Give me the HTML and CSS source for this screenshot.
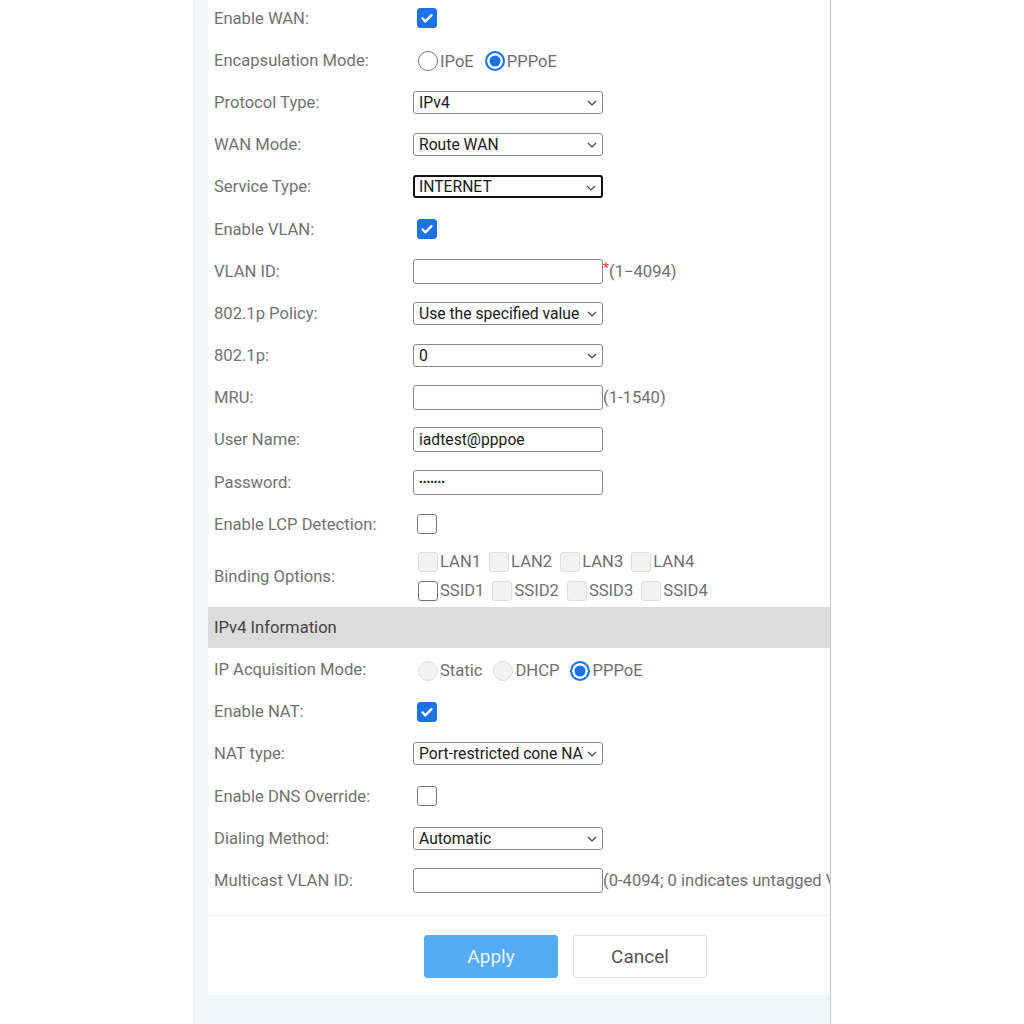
FILE: index.html
```html
<!DOCTYPE html>
<html>
<head>
<meta charset="utf-8">
<link rel="stylesheet" href="styles.css">
</head>
<body>
<div class="page">
  <div class="card">
    <div class="rows">
      <div class="row"><div class="lbl">Enable WAN:</div><div class="ctl"><span class="cb on"><svg viewBox="0 0 20 20"><path d="M5 10.5l3.2 3.2L15 6.8" fill="none" stroke="#fff" stroke-width="2.6" stroke-linecap="round" stroke-linejoin="round"/></svg></span></div></div>
      <div class="row"><div class="lbl">Encapsulation Mode:</div><div class="ctl opts"><span class="rd"></span><span class="opt-t">IPoE</span><span class="rd on"></span><span class="opt-t">PPPoE</span></div></div>
      <div class="row"><div class="lbl">Protocol Type:</div><div class="ctl"><div class="sel">IPv4<svg class="chev" viewBox="0 0 10 6"><path d="M1 1l4 4 4-4" fill="none" stroke="#444" stroke-width="1.2"/></svg></div></div></div>
      <div class="row"><div class="lbl">WAN Mode:</div><div class="ctl"><div class="sel">Route WAN<svg class="chev" viewBox="0 0 10 6"><path d="M1 1l4 4 4-4" fill="none" stroke="#444" stroke-width="1.2"/></svg></div></div></div>
      <div class="row"><div class="lbl">Service Type:</div><div class="ctl"><div class="sel focus">INTERNET<svg class="chev" viewBox="0 0 10 6"><path d="M1 1l4 4 4-4" fill="none" stroke="#444" stroke-width="1.2"/></svg></div></div></div>
      <div class="row"><div class="lbl">Enable VLAN:</div><div class="ctl"><span class="cb on"><svg viewBox="0 0 20 20"><path d="M5 10.5l3.2 3.2L15 6.8" fill="none" stroke="#fff" stroke-width="2.6" stroke-linecap="round" stroke-linejoin="round"/></svg></span></div></div>
      <div class="row"><div class="lbl">VLAN ID:</div><div class="ctl"><div class="inp"></div><span class="req">*</span><span class="hint">(1−4094)</span></div></div>
      <div class="row"><div class="lbl">802.1p Policy:</div><div class="ctl"><div class="sel"><span class="clip">Use the specified value</span><svg class="chev" viewBox="0 0 10 6"><path d="M1 1l4 4 4-4" fill="none" stroke="#444" stroke-width="1.2"/></svg></div></div></div>
      <div class="row"><div class="lbl">802.1p:</div><div class="ctl"><div class="sel">0<svg class="chev" viewBox="0 0 10 6"><path d="M1 1l4 4 4-4" fill="none" stroke="#444" stroke-width="1.2"/></svg></div></div></div>
      <div class="row"><div class="lbl">MRU:</div><div class="ctl"><div class="inp"></div><span class="hint">(1-1540)</span></div></div>
      <div class="row"><div class="lbl">User Name:</div><div class="ctl"><div class="inp">iadtest@pppoe</div></div></div>
      <div class="row"><div class="lbl">Password:</div><div class="ctl"><div class="inp pw">•••••••</div></div></div>
      <div class="row"><div class="lbl">Enable LCP Detection:</div><div class="ctl"><span class="cb"></span></div></div>
      <div class="row bind"><div class="lbl">Binding Options:</div>
        <div class="ctl binds">
          <div class="bline"><span class="cb dis"></span><span class="opt-t">LAN1</span><span class="cb dis"></span><span class="opt-t">LAN2</span><span class="cb dis"></span><span class="opt-t">LAN3</span><span class="cb dis"></span><span class="opt-t">LAN4</span></div>
          <div class="bline"><span class="cb"></span><span class="opt-t">SSID1</span><span class="cb dis"></span><span class="opt-t">SSID2</span><span class="cb dis"></span><span class="opt-t">SSID3</span><span class="cb dis"></span><span class="opt-t">SSID4</span></div>
        </div>
      </div>
      <div class="section">IPv4 Information</div>
      <div class="row"><div class="lbl">IP Acquisition Mode:</div><div class="ctl opts"><span class="rd dis"></span><span class="opt-t">Static</span><span class="rd dis"></span><span class="opt-t">DHCP</span><span class="rd on"></span><span class="opt-t">PPPoE</span></div></div>
      <div class="row"><div class="lbl">Enable NAT:</div><div class="ctl"><span class="cb on"><svg viewBox="0 0 20 20"><path d="M5 10.5l3.2 3.2L15 6.8" fill="none" stroke="#fff" stroke-width="2.6" stroke-linecap="round" stroke-linejoin="round"/></svg></span></div></div>
      <div class="row"><div class="lbl">NAT type:</div><div class="ctl"><div class="sel"><span class="clip">Port-restricted cone NAT</span><svg class="chev" viewBox="0 0 10 6"><path d="M1 1l4 4 4-4" fill="none" stroke="#444" stroke-width="1.2"/></svg></div></div></div>
      <div class="row"><div class="lbl">Enable DNS Override:</div><div class="ctl"><span class="cb"></span></div></div>
      <div class="row"><div class="lbl">Dialing Method:</div><div class="ctl"><div class="sel">Automatic<svg class="chev" viewBox="0 0 10 6"><path d="M1 1l4 4 4-4" fill="none" stroke="#444" stroke-width="1.2"/></svg></div></div></div>
      <div class="row"><div class="lbl">Multicast VLAN ID:</div><div class="ctl"><div class="inp"></div><span class="hint">(0-4094; 0 indicates untagged VLAN)</span></div></div>
    </div>
    <div class="actions">
      <button class="btn primary">Apply</button>
      <button class="btn">Cancel</button>
    </div>
  </div>
</div>
</body>
</html>
```

FILE: styles.css
```css
* { box-sizing: border-box; }
html, body { margin: 0; padding: 0; background: #fff; }
body { font-family: Roboto, "Liberation Sans", sans-serif; color: #707070; width: 1024px; height: 1024px; overflow: hidden; }

.page {
  margin-left: 193px;
  width: 638px;
  height: 1024px;
  background: #f3f6fb;
  border-right: 1px solid #c8c8c8;
  padding-left: 15px;
}
.card {
  background: #fff;
  overflow: hidden;
  height: 995px;
}
.rows { margin-top: -3px; padding-bottom: 13px; }
.row {
  display: flex;
  align-items: center;
  height: 42.2px;
  padding-left: 6px;
}
.lbl {
  width: 199px;
  flex: none;
  font-size: 16.6px;
  color: #727272;
  white-space: nowrap;
}
.ctl {
  display: flex;
  align-items: center;
  white-space: nowrap;
  min-width: 0;
}

.cb {
  width: 20px;
  height: 20px;
  border-radius: 3px;
  border: 1.5px solid #777;
  background: #fff;
  margin-left: 4px;
  display: inline-block;
  flex: none;
}
.cb svg { display: block; width: 100%; height: 100%; }
.cb.on { background: #1a73e8; border-color: #1a73e8; }
.cb.dis { background: #f2f2f2; border: 1px solid #dedede; }

.rd {
  width: 20px;
  height: 20px;
  border-radius: 50%;
  border: 1.5px solid #777;
  background: #fff;
  margin-left: 5px;
  flex: none;
}
.rd.on { border: 2px solid #1a73e8; box-shadow: inset 0 0 0 2.5px #fff; background: #1a73e8; }
.rd.dis { background: #f2f2f2; border: 1px solid #dedede; }
.opt-t { font-size: 16.6px; color: #707070; margin-left: 2px; margin-right: 6px; }
.opts { padding-top: 2px; }

.sel {
  width: 190px;
  height: 23px;
  border: 1px solid #8a8a8a;
  border-radius: 3px;
  display: flex;
  align-items: center;
  padding-left: 5px;
  font-size: 15.7px;
  color: #1a1a1a;
  position: relative;
  flex: none;
}
.sel.focus { border: 2px solid #111; padding-left: 4px; }
.chev { position: absolute; right: 5px; top: 8px; width: 10px; height: 6px; }
.clip { overflow: hidden; width: 164px; white-space: nowrap; }

.inp {
  width: 190px;
  height: 25px;
  border: 1px solid #8a8a8a;
  border-radius: 3px;
  display: flex;
  align-items: center;
  padding-left: 5px;
  font-size: 15.7px;
  color: #1a1a1a;
  flex: none;
}
.inp.pw { font-size: 11px; letter-spacing: 0; color: #222; }
.req { color: #e53935; font-size: 14px; margin-top: -6px; }
.hint { font-size: 16.6px; color: #707070; }

.row.bind { height: 62px; }
.binds { flex-direction: column; align-items: flex-start; }
.bline { display: flex; align-items: center; height: 29px; }
.bline .opt-t { margin-right: 3px; }
.bline .cb { margin-left: 5px; }

.section {
  height: 41px;
  background: #dcdcdc;
  display: flex;
  align-items: center;
  padding-left: 6px;
  font-size: 16.6px;
  color: #444;
}

.actions {
  border-top: 1px solid #ececec;
  padding: 19px 0 0 216px;
  display: flex;
  gap: 15px;
}
.btn {
  width: 134px;
  height: 43px;
  border-radius: 3px;
  border: 1px solid #ddd;
  background: #fff;
  font-family: Roboto, "Liberation Sans", sans-serif;
  font-size: 19px;
  color: #555;
}
.btn.primary { background: #55acf5; border-color: #55acf5; color: #e6f2fe; }
```
